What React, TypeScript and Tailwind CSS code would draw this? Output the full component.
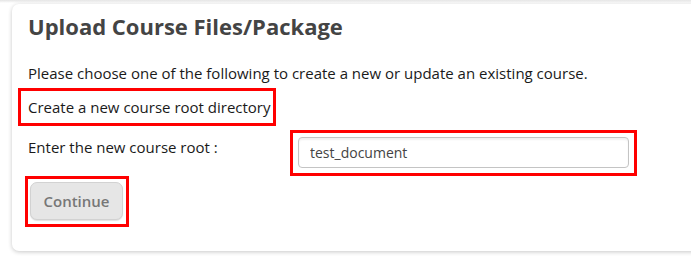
import React from "react";

const App = () => {
  return (
    <div className="w-[691px] h-[268px] overflow-hidden bg-white font-['Open_Sans',sans-serif]">
      <div className="h-[3px] bg-gradient-to-b from-[#e4e4e4] to-white" />
      <div className="ml-[12px] mt-[1px] w-[700px] h-[247px] rounded-[7px] bg-white shadow-[0_1px_4px_rgba(0,0,0,0.22)] px-[16px] pt-[7px]">
        <h2 className="text-[22px] leading-[30px] font-bold text-[#444]">
          Upload Course Files/Package
        </h2>
        <p className="mt-[22px] text-[15px] leading-[20px] text-[#1a1a1a]">
          Please choose one of the following to create a new or update an existing course.
        </p>
        <div className="mt-[5px] -ml-[10px] w-[258px] h-[38px] border-[3px] border-[#ff0000] pl-[7px] flex items-center text-[15px] text-[#1a1a1a]">
          Create a new course root directory
        </div>
        <div className="flex items-start">
          <div className="w-[262px] pt-[11px] text-[15px] leading-[20px] text-[#1a1a1a]">
            Enter the new course root :
          </div>
          <div className="mt-[4px] w-[347px] h-[46px] border-[3px] border-[#ff0000] px-[5px] pt-[4px]">
            <input
              readOnly
              value="test_document"
              className="w-full h-[31px] rounded-[4px] border border-[#c4c4c4] bg-white px-[11px] text-[14px] text-[#444] shadow-[inset_0_2px_2px_rgba(0,0,0,0.06)] outline-none font-['Open_Sans',sans-serif]"
            />
          </div>
        </div>
        <div className="-ml-[3px] w-[104px] h-[51px] border-[3px] border-[#ff0000] pl-[2px] pt-[3px]">
          <button className="w-[93px] h-[38px] rounded-[7px] bg-[#e6e6e6] border border-[#d2d2d2] shadow-[0_1px_1px_rgba(0,0,0,0.12)] text-[15px] font-semibold text-[#777]">
            Continue
          </button>
        </div>
      </div>
    </div>
  );
};

export default App;
